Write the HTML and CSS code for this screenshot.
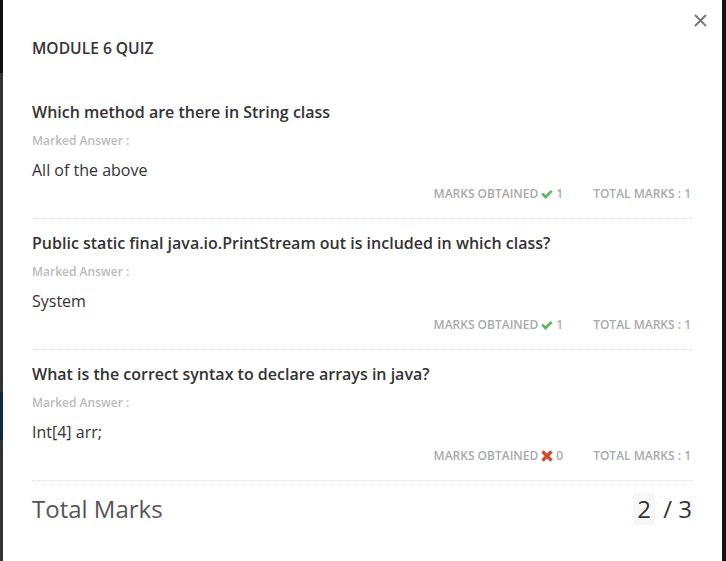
FILE: index.html
```html
<!DOCTYPE html>
<html>
<head>
<meta charset="utf-8">
<link rel="stylesheet" href="styles.css">
</head>
<body>
<div class="page">
  <div class="backdrop-left"></div>
  <div class="modal">
    <button class="close" aria-label="Close">
      <svg width="13" height="13" viewBox="0 0 13 13"><path d="M1 1L12 12M12 1L1 12" stroke="#777" stroke-width="1.8" fill="none"/></svg>
    </button>
    <h1 class="title">MODULE 6 QUIZ</h1>

    <div class="question">
      <h2 class="q-text">Which method are there in String class</h2>
      <div class="label">Marked Answer :</div>
      <div class="answer">All of the above</div>
      <div class="marks">
        <span class="obtained">MARKS OBTAINED
          <svg class="icon" width="12" height="11" viewBox="0 0 12 11"><path d="M0.3 5.6L2.2 3.7L4.6 6.1L9.8 0.9L11.7 2.8L4.6 9.9Z" fill="#5cb85c"/></svg>
          1</span>
        <span class="total">TOTAL MARKS : 1</span>
      </div>
    </div>

    <div class="question">
      <h2 class="q-text">Public static final java.io.PrintStream out is included in which class?</h2>
      <div class="label">Marked Answer :</div>
      <div class="answer">System</div>
      <div class="marks">
        <span class="obtained">MARKS OBTAINED
          <svg class="icon" width="12" height="11" viewBox="0 0 12 11"><path d="M0.3 5.6L2.2 3.7L4.6 6.1L9.8 0.9L11.7 2.8L4.6 9.9Z" fill="#5cb85c"/></svg>
          1</span>
        <span class="total">TOTAL MARKS : 1</span>
      </div>
    </div>

    <div class="question">
      <h2 class="q-text">What is the correct syntax to declare arrays in java?</h2>
      <div class="label">Marked Answer :</div>
      <div class="answer">Int[4] arr;</div>
      <div class="marks">
        <span class="obtained">MARKS OBTAINED
          <svg class="icon" width="12" height="12" viewBox="0 0 12 12"><path d="M1.5 1.5L10.5 10.5M10.5 1.5L1.5 10.5" stroke="#d9482b" stroke-width="3.2" fill="none"/></svg>
          0</span>
        <span class="total">TOTAL MARKS : 1</span>
      </div>
    </div>

    <div class="summary">
      <span class="summary-label">Total Marks</span>
      <span class="summary-value"><span class="got">2</span> / 3</span>
    </div>
  </div>
  <div class="backdrop-right"></div>
</div>
</body>
</html>
```

FILE: styles.css
```css
html, body {
  margin: 0;
  padding: 0;
  height: 100%;
  background: #333;
}
body {
  font-family: "Open Sans", "Liberation Sans", sans-serif;
  color: #333;
}
.page {
  display: flex;
  height: 561px;
  overflow: hidden;
}
.backdrop-left {
  width: 3px;
  flex: none;
  background: linear-gradient(to bottom, #111 0, #111 73px, #333 73px, #333 392px, #0e2b47 392px, #0e2b47 440px, #333 440px);
}
.backdrop-right {
  width: 4px;
  flex: none;
  background: #141414;
}
.modal {
  position: relative;
  flex: 1;
  background: #fff;
  padding: 38px 30px 0 29px;
}
.close {
  position: absolute;
  top: 14px;
  right: 15px;
  background: none;
  border: 0;
  padding: 0;
  width: 13px;
  height: 13px;
  cursor: pointer;
}
.close svg { display: block; }
.title {
  margin: 0;
  font-size: 15.6px;
  line-height: 20px;
  font-weight: 600;
  color: #333;
}
.question {
  margin-top: 14px;
  padding-bottom: 16px;
  border-bottom: 1px dotted #ddd;
}
.title + .question { margin-top: 44px; }
.q-text {
  margin: 0;
  font-size: 16px;
  line-height: 20px;
  font-weight: 600;
  color: #333;
}
.label {
  margin-top: 10px;
  font-size: 12px;
  line-height: 18px;
  font-weight: 600;
  color: #bbb;
}
.answer {
  margin-top: 9px;
  font-size: 16px;
  line-height: 22px;
  color: #333;
}
.marks {
  margin-top: 5px;
  display: flex;
  justify-content: flex-end;
  gap: 30px;
  font-size: 12px;
  line-height: 16px;
  font-weight: 600;
  color: #aaa;
}
.obtained {
  display: flex;
  align-items: center;
  gap: 3px;
}
.icon { display: block; }
.total { padding-right: 1px; }
.summary {
  margin-top: 12px;
  display: flex;
  justify-content: space-between;
  align-items: center;
  font-size: 24px;
  line-height: 32px;
  color: #555;
}
.summary-label { font-weight: 400; }
.summary-value {
  font-weight: 400;
  color: #333;
}
.got {
  display: inline-block;
  background: #f7f7f7;
  padding: 0 4px;
  margin-right: 2px;
}
```
